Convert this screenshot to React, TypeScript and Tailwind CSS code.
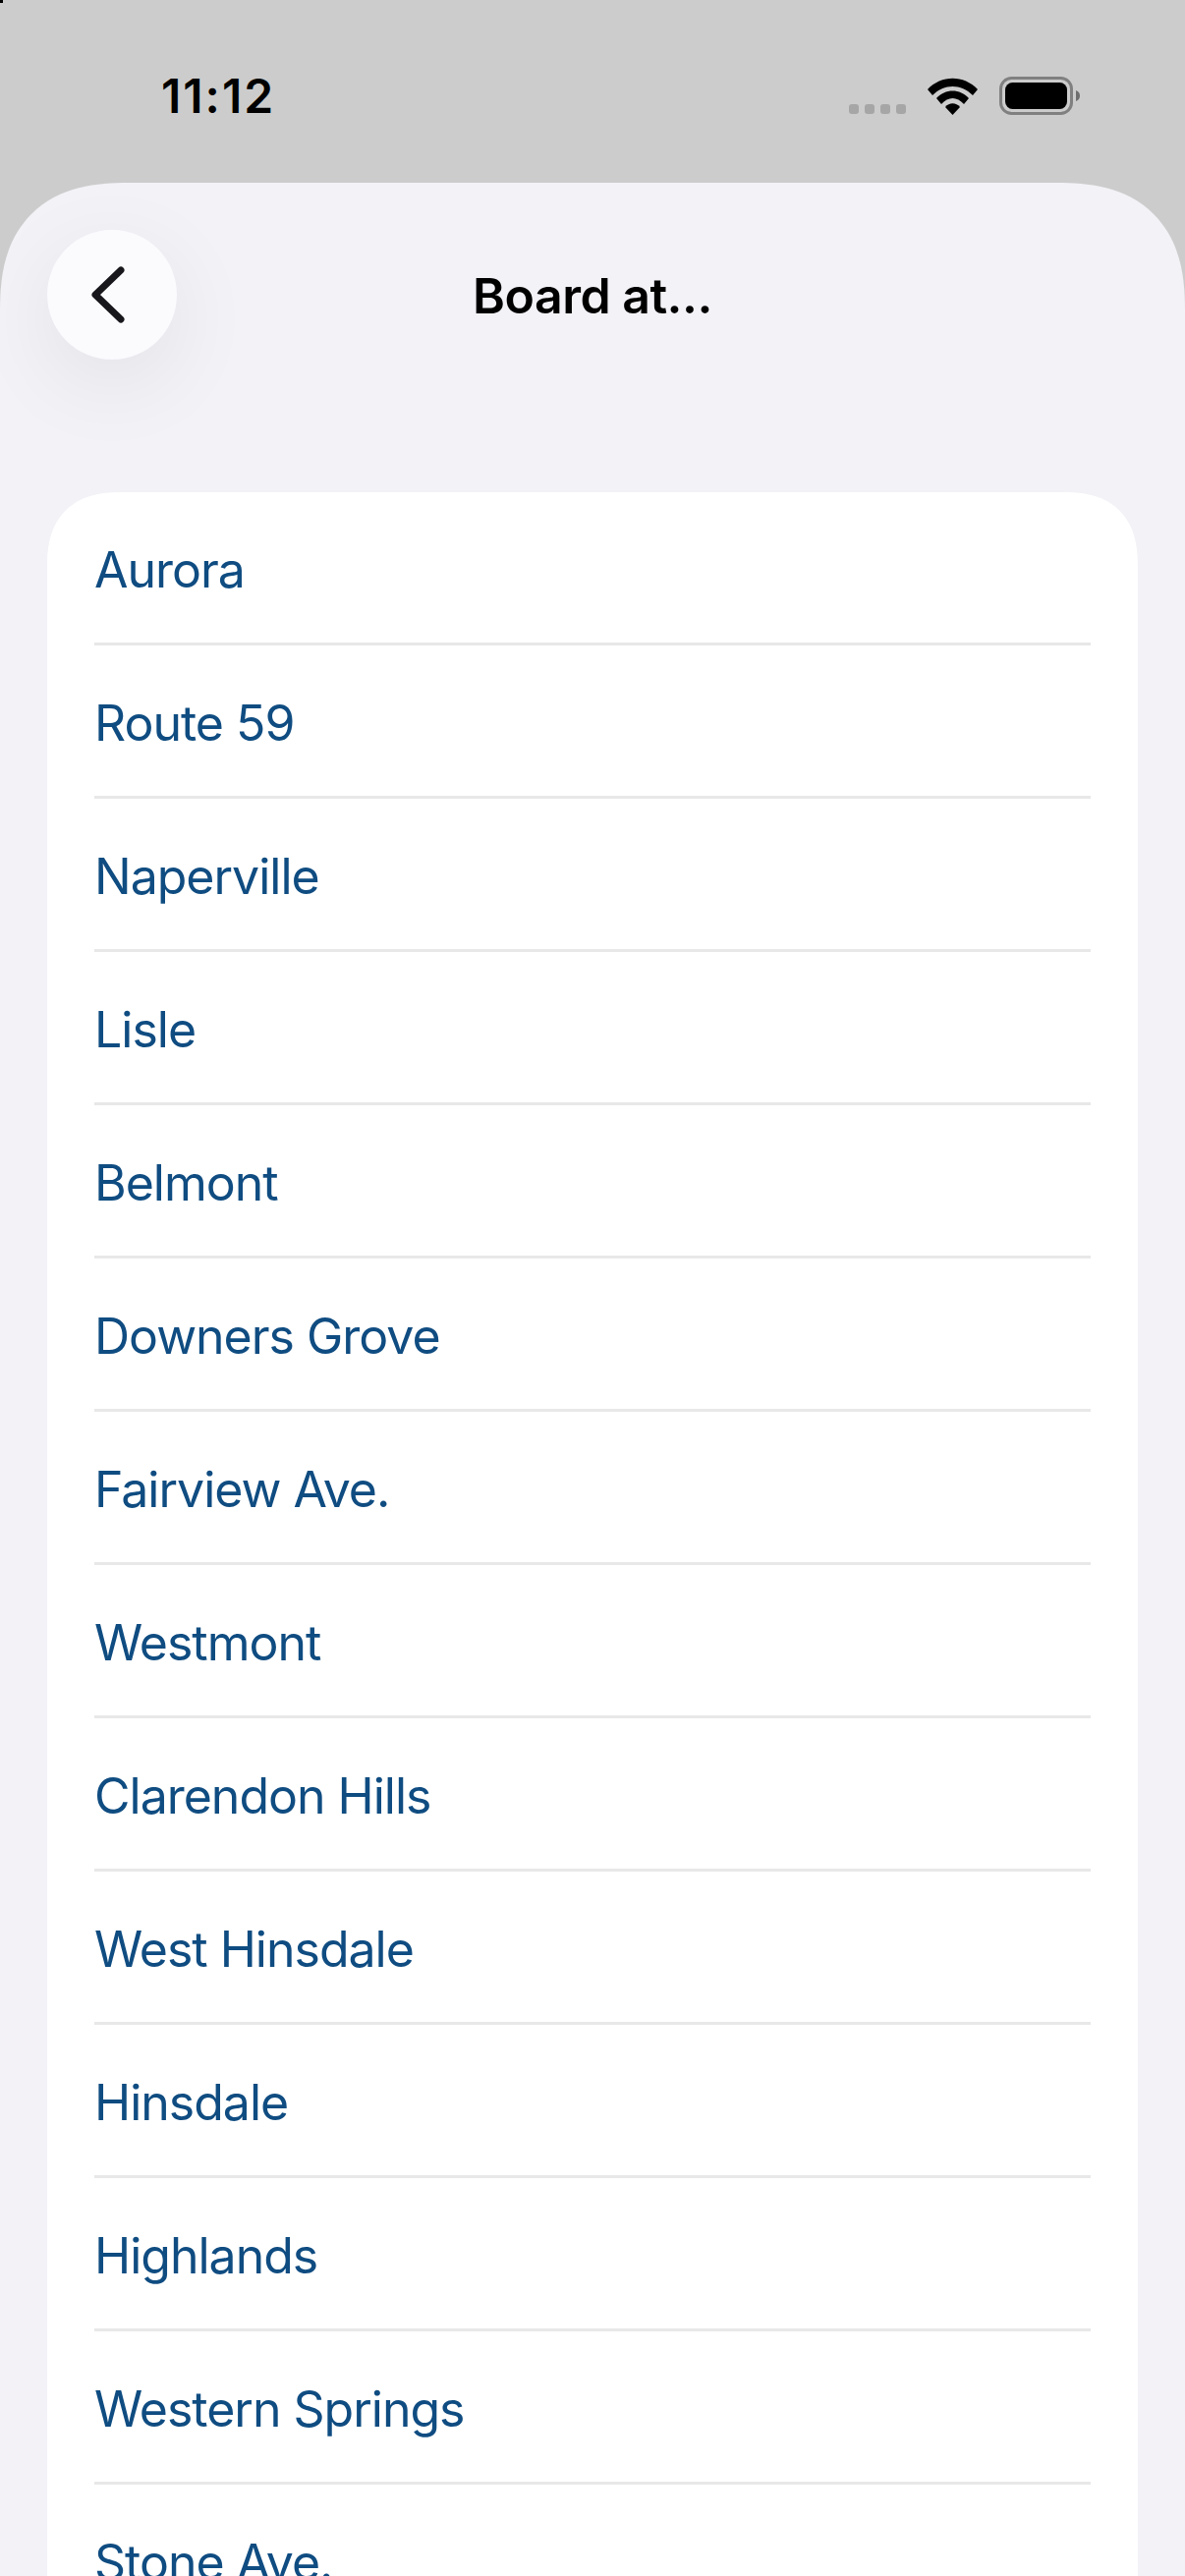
const stops = [
  "Aurora",
  "Route 59",
  "Naperville",
  "Lisle",
  "Belmont",
  "Downers Grove",
  "Fairview Ave.",
  "Westmont",
  "Clarendon Hills",
  "West Hinsdale",
  "Hinsdale",
  "Highlands",
  "Western Springs",
  "Stone Ave.",
];

function StatusBar() {
  return (
    <div className="flex h-[186px] shrink-0 items-start justify-between pl-[164px] pr-[106px] pt-[69px]">
      <span className="text-[48px] font-semibold leading-[58px] tracking-[2px] text-black">11:12</span>
      <div className="mt-[9px] flex items-end">
        <div className="mb-[1px] flex gap-[6px]">
          <span className="h-[10px] w-[10px] rounded-[3px] bg-[#a6a6a6]" />
          <span className="h-[10px] w-[10px] rounded-[3px] bg-[#a6a6a6]" />
          <span className="h-[10px] w-[10px] rounded-[3px] bg-[#a6a6a6]" />
          <span className="h-[10px] w-[10px] rounded-[3px] bg-[#a6a6a6]" />
        </div>
        {/* wifi */}
        <svg className="ml-[22px]" width="51" height="38" viewBox="0 0 51 38">
          <path d="M0 12 C14 -3 37 -3 51 12 L46 18 C34 6 17 6 5 18 Z" fill="#000" />
          <path d="M9 21 C18 11 33 11 42 21 L37 27 C30 19 21 19 14 27 Z" fill="#000" />
          <path d="M18 30 C22 25 29 25 33 30 L25.500 38 Z" fill="#000" />
        </svg>
        {/* battery */}
        <svg className="ml-[22px]" width="83" height="39" viewBox="0 0 83 39">
          <rect x="1.500" y="1.500" width="72" height="36" rx="11" fill="none" stroke="#808080" strokeWidth="3" />
          <rect x="6" y="6" width="63" height="27" rx="7.500" fill="#000" />
          <path d="M78 14 C81 15 82 17 82 19.500 C82 22 81 24 78 25 Z" fill="#6e6e6e" />
        </svg>
      </div>
    </div>
  );
}

export default function App() {
  return (
    <div className="relative flex h-[2622px] w-[1206px] flex-col overflow-hidden bg-[#cccccc] font-['Inter',sans-serif]">
      <span className="absolute left-0 top-0 h-[3px] w-[3px] bg-black" />
      <StatusBar />

      <div className="flex-1 overflow-hidden rounded-t-[130px] bg-[#f2f2f7] [corner-shape:superellipse(1.3)]">
        <header className="grid grid-cols-[132px_1fr_132px] items-center px-[48px] pt-[48px]">
          <button className="flex h-[132px] w-[132px] items-center justify-center rounded-full bg-[#fbfbfe] shadow-[0_24px_90px_rgba(0,0,0,0.07)]">
            <svg className="mr-[8px]" width="38" height="60" viewBox="0 0 38 60" fill="none">
              <path d="M32 5 L6 30 L32 55" stroke="#17171c" strokeWidth="7" strokeLinecap="round" strokeLinejoin="round" />
            </svg>
          </button>
          <h1 className="pt-[2px] text-center text-[50px] font-semibold leading-[60px] tracking-[-0.5px] text-black">Board at...</h1>
          <div />
        </header>

        <ul className="mx-[48px] mt-[135px] rounded-t-[76px] bg-white px-[48px] [corner-shape:superellipse(1.3)]">
          {stops.map((stop) => (
            <li
              key={stop}
              className="flex h-[156px] items-start border-b-[3px] border-[#e8e8e8] pt-[49px] text-[50px] leading-[60px] tracking-[-1px] text-[#0f4c81]"
            >
              {stop}
            </li>
          ))}
        </ul>
      </div>
    </div>
  );
}
